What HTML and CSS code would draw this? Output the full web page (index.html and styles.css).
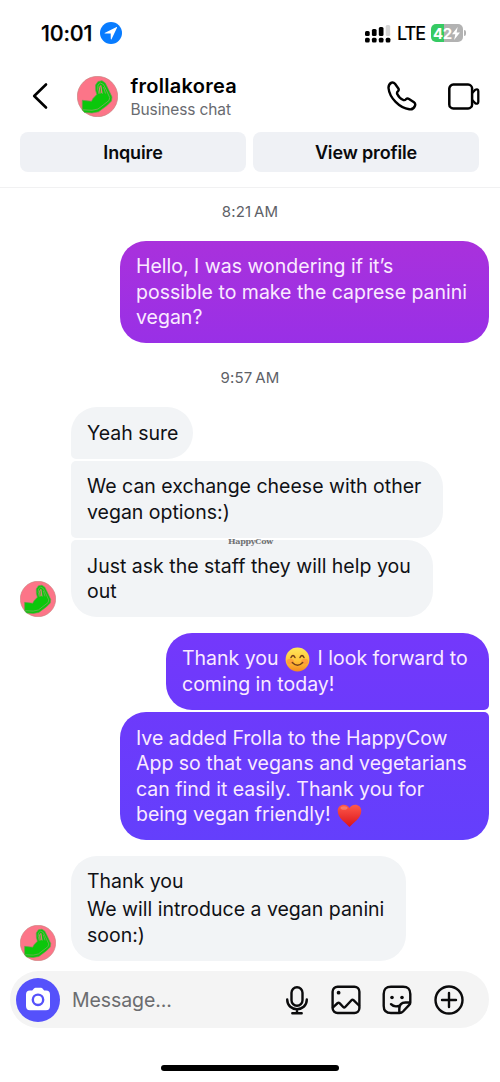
FILE: index.html
```html
<!DOCTYPE html>
<html lang="en">
<head>
<meta charset="utf-8">
<title>frollakorea</title>
<link rel="stylesheet" href="styles.css">
</head>
<body>
<svg class="defs" width="0" height="0">
  <defs>
    <linearGradient id="face" x1="0" y1="0" x2="0" y2="1"><stop offset="0" stop-color="#ffe75a"/><stop offset=".55" stop-color="#ffc53a"/><stop offset="1" stop-color="#f58a1f"/></linearGradient>
    <linearGradient id="love" x1="0" y1="0" x2="0" y2="1"><stop offset="0" stop-color="#ff5a4a"/><stop offset="1" stop-color="#d9131b"/></linearGradient>
    <symbol id="avatar" viewBox="0 0 41 41">
      <circle cx="20.5" cy="20.5" r="20.2" fill="#fc7588" stroke="#c08078" stroke-width=".6"/>
      <path d="M5.300 24.300L14.500 25.300L16 22.500L19.800 18.500L18.700 14.500L18.500 9L21 5.500L25 4.700L28.300 7L31 12.500L35 21L34.500 25L30 29.500L21.500 35.800L15 37L7.500 36.500L5.300 34Z" fill="#0bc70b" stroke="#6a9a50" stroke-width=".7" stroke-linejoin="round"/>
      <path d="M22 18L20.700 13L21 9L23.500 7L26.500 8.500L29 13.500L32.700 21.500L32 24.500L21 33L15 34.300L6 33.800M24 10.500L25.300 18M26.500 11L28.500 17.500" fill="none" stroke="#88a866" stroke-width=".8"/>
      <path d="M23.100 17.500L22.300 11.500L23.800 9.500L24.800 17" fill="none" stroke="#f07a80" stroke-width="1"/>
    </symbol>
  </defs>
</svg>
<div class="screen">
  <div class="status">
    <span class="clock">10:01</span>
    <svg class="location" width="22" height="22" viewBox="0 0 22 22"><circle cx="11" cy="11" r="11" fill="#087cff"/><path d="M4.600 10.900L16.600 5.100Q17.300 4.900 17 5.700L11.500 17.200Q11 17.800 10.800 17L10.700 11.600L5 11.500Q4.100 11.300 4.600 10.900Z" fill="#fff"/></svg>
    <svg class="signal" width="26" height="19" viewBox="0 0 26 19">
      <g fill="#000"><rect x="0" y="7" width="4.700" height="5" rx="1.500"/><rect x="6.900" y="5" width="4.700" height="7" rx="1.500"/><rect x="13.800" y="3" width="4.700" height="9" rx="1.500"/><rect x="0" y="13.800" width="4.700" height="4.800" rx="1.500"/><rect x="6.900" y="13.800" width="4.700" height="4.800" rx="1.500"/><rect x="13.800" y="13.800" width="4.700" height="4.800" rx="1.500"/><rect x="20.700" y="13.800" width="4.700" height="4.800" rx="1.500"/></g>
      <rect x="20.700" y="1" width="4.500" height="11" rx="1.500" fill="#d6d6d6"/>
    </svg>
    <span class="network">LTE</span>
    <div class="battery">
      <span>42</span>
      <svg width="8" height="13" viewBox="0 0 8 13"><path d="M5.700 0L0 7.200H3.300L2.100 13L8 5.500H4.600Z" fill="#fff"/></svg>
    </div>
    <i class="battery-tip"></i>
  </div>

  <header class="header">
    <svg class="back" width="18" height="28" viewBox="0 0 18 28"><path d="M15 2.500L3.200 14L15 25.500" fill="none" stroke="#000" stroke-width="2.600" stroke-linecap="round" stroke-linejoin="round"/></svg>
    <svg class="avatar-large"><use href="#avatar"/></svg>
    <div class="who"><div class="name">frollakorea</div><div class="kind">Business chat</div></div>
    <svg class="call" width="30" height="30" viewBox="0 0 30 30"><path d="M4.500 1.600Q6.500 1 8 2.800L11.200 7.200Q12.300 8.900 11 10.200Q9.600 11.400 10.200 13.100C11.600 16 13.600 17.900 16.300 19Q17.800 19.500 19 18.200Q20.400 17 22 18L27 21.300Q28.800 22.600 28 24.700C27 27.300 25 28.700 22.300 28.300C12.500 27 2.500 17 1.500 7Q1.400 3.200 4.500 1.600Z" fill="none" stroke="#000" stroke-width="2.400" stroke-linejoin="round"/></svg>
    <svg class="video" width="32" height="27" viewBox="0 0 32 27"><rect x="1.300" y="1.600" width="22.800" height="23.800" rx="4" fill="none" stroke="#000" stroke-width="2.500"/><path d="M24.200 10L27.300 6.700Q30.300 5.500 30.300 8.200V18.800Q30.300 21.300 27.300 20.300L24.200 17" fill="none" stroke="#000" stroke-width="2.300" stroke-linejoin="round"/></svg>
  </header>

  <div class="actions"><div class="button">Inquire</div><div class="button">View profile</div></div>

  <main class="chat">
    <div class="time first">8:21 AM</div>
    <div class="bubble mine violet">Hello, I was wondering if it’s<br>possible to make the caprese panini<br>vegan?</div>
    <div class="time second">9:57 AM</div>
    <div class="row">
      <svg class="avatar-small"><use href="#avatar"/></svg>
      <div class="stack">
        <div class="bubble theirs top w-yeah">Yeah sure</div>
        <div class="bubble theirs middle w-exchange">We can exchange cheese with other<br>vegan options:)</div>
        <div class="bubble theirs bottom w-staff">Just ask the staff they will help you<br>out</div>
      </div>
      <div class="watermark">HappyCow</div>
    </div>
    <div class="bubble mine thanks">Thank you <svg class="emoji smile" width="25" height="25" viewBox="0 0 25 25"><circle cx="12.500" cy="12.500" r="11.900" fill="url(#face)"/><ellipse cx="5.300" cy="14.500" rx="3.600" ry="2.800" fill="#ff853d" opacity=".55"/><ellipse cx="19.700" cy="14.500" rx="3.600" ry="2.800" fill="#ff853d" opacity=".55"/><path d="M6 10.500Q8 6.500 10 10.500M15 10.500Q17 6.500 19 10.500M7.300 15.500Q12.500 21 17.700 15.500" fill="none" stroke="#74401a" stroke-width="1.500" stroke-linecap="round"/></svg> I look forward to<br>coming in today!</div>
    <div class="bubble mine added">Ive added Frolla to the HappyCow<br>App so that vegans and vegetarians<br>can find it easily. Thank you for<br>being vegan friendly! <svg class="emoji heart" width="25" height="25" viewBox="0 0 25 25"><path d="M12.500 24C9 20 .7 15.500 .7 7.800C.7 1.300 9 -.7 12.500 5C16 -.7 24.300 1.300 24.300 7.800C24.300 15.500 16 20 12.500 24Z" fill="url(#love)"/><ellipse cx="7" cy="5" rx="3.500" ry="1.800" fill="#ff9b85" opacity=".55"/></svg></div>
    <div class="row last">
      <svg class="avatar-small"><use href="#avatar"/></svg>
      <div class="bubble theirs w-panini"><p>Thank you</p><p>We will introduce a vegan panini<br>soon:)</p></div>
    </div>
  </main>

  <footer class="composer">
    <svg class="camera" width="44" height="44" viewBox="0 0 44 44"><circle cx="22" cy="22" r="22" fill="#5551fb"/><path d="M14 12.500H16.200L18 10.500Q18.600 9.800 19.500 9.800H25Q25.900 9.800 26.500 10.500L28.200 12.500H30Q34 12.500 34 16.500V28Q34 32.200 30 32.200H14Q10 32.200 10 28V16.500Q10 12.500 14 12.500Z" fill="#fff"/><circle cx="22" cy="21.800" r="5.200" fill="none" stroke="#5551fb" stroke-width="2.400"/></svg>
    <span class="placeholder">Message...</span>
    <div class="tools">
      <svg class="mic" width="30" height="30" viewBox="0 0 30 30"><rect x="9.500" y="2.200" width="11" height="18.600" rx="5.500"/><path d="M5.200 14.500C5.200 27.400 24.800 27.400 24.800 14.500M15 24.200V28M10.300 28.200H19.700"/></svg>
      <svg width="30" height="30" viewBox="0 0 30 30"><rect x="1.600" y="1.700" width="26.800" height="26.300" rx="5"/><path d="M2 22.300L6.700 18Q7.700 17.200 8.600 18.200L12.200 22Q13.200 23 14.200 22L20.500 15.200Q21.500 14.200 22.500 15.200L28 20.500"/><circle class="dot" cx="7.600" cy="7.700" r="1.900"/></svg>
      <svg width="30" height="30" viewBox="0 0 30 30"><path d="M28.300 17.500V9Q28.300 1.700 21 1.700H9Q1.700 1.700 1.700 9V21Q1.700 28 9 28H17.500Q19.500 28 21 26.500L27 20.200Q28.300 19 28.300 17.500ZM17.300 27.800V24Q17.300 17.500 23.500 17.500H28M9 19.200Q12.200 22.500 17 20.800"/><circle class="dot" cx="10" cy="12.500" r="1.800"/><circle class="dot" cx="20" cy="12.500" r="1.800"/></svg>
      <svg width="30" height="30" viewBox="0 0 30 30"><circle cx="15" cy="15" r="13.500"/><path d="M15 8V22M8 15H22"/></svg>
    </div>
  </footer>
  <div class="home"></div>
</div>
</body>
</html>
```
FILE: styles.css
```css
* { box-sizing: border-box; }
body { margin: 0; background: #fff; font-family: Inter, "Liberation Sans", sans-serif; color: #101115; }
svg { display: block; flex: none; }
p { margin: 0; }
.defs { position: absolute; }
.screen { width: 500px; height: 1082px; display: flex; flex-direction: column; overflow: hidden; }

.status { height: 66px; display: flex; align-items: center; padding-left: 41px; color: #000; flex: none; }
.clock { width: 59px; font-size: 21.500px; font-weight: 500; letter-spacing: -.2px; white-space: nowrap; -webkit-text-stroke: .25px #000; }
.signal { margin-left: 243px; }
.network { width: 33.500px; font-size: 18px; font-weight: 500; letter-spacing: -1px; margin-left: 6px; }
.battery { width: 32px; height: 18px; border-radius: 5px; background: linear-gradient(90deg, #36ca63 42%, #b2b2b2 42%); display: flex; align-items: center; justify-content: center; color: #fff; font-size: 15px; font-weight: 700; letter-spacing: -.4px; }
.battery-tip { width: 2px; height: 6px; margin-left: 1px; border-radius: 0 2px 2px 0; background: #b2b2b2; }

.header { height: 66px; display: flex; align-items: center; padding: 0 19px 6px 31px; flex: none; }
.avatar-large { width: 41px; height: 41px; margin-left: 28px; }
.who { width: 258px; margin-left: 12.500px; padding-top: 3px; }
.name { font-size: 20px; line-height: 24px; font-weight: 600; letter-spacing: .28px; color: #000; }
.kind { font-size: 15.500px; line-height: 23px; letter-spacing: -.12px; color: #696b70; }
.call { margin-left: -1.500px; }
.video { margin-left: 31px; }

.actions { height: 56px; flex: none; display: grid; grid-template-columns: 226px 226px; gap: 7px; padding-left: 20px; border-bottom: 1.500px solid #f1f1f2; }
.button { height: 40px; border-radius: 8px; background: #eff1f5; text-align: center; font-size: 18px; line-height: 41px; font-weight: 600; letter-spacing: -.15px; color: #090a0d; }

.chat { height: 783px; flex: none; display: flex; flex-direction: column; }
.time { text-align: center; font-size: 15px; line-height: 20px; word-spacing: -1.500px; letter-spacing: .15px; color: #5e6167; }
.first { margin: 13.500px 0 19.200px; }
.second { margin: 25px 0 19.300px; }
.bubble { padding: 13.300px 0 12.300px 16px; border-radius: 26px; font-size: 19.500px; line-height: 25.600px; white-space: nowrap; }
.mine { align-self: flex-end; margin-right: 11px; width: 369px; color: #faeaff; }
.violet { background: linear-gradient(#a931dc, #9930e6); }
.thanks { width: 323px; margin-top: 16px; border-bottom-right-radius: 5px; background: linear-gradient(#7438fb, #6c3afb); }
.added { margin-top: 2.500px; border-top-right-radius: 5px; background: linear-gradient(#6d3afb, #643ffc); }
.emoji { display: inline-block; vertical-align: 1px; margin: -8px 0 -8px 1px; }
.smile { margin-right: 2px; }
.row { position: relative; display: flex; align-items: flex-end; gap: 15px; padding-left: 20px; }
.last { margin-top: 15.700px; }
.last p + p { margin-top: 2.500px; }
.avatar-small { width: 36px; height: 36px; }
.stack { display: flex; flex-direction: column; gap: 2.500px; }
.theirs { background: #f2f4f6; }
.top { border-bottom-left-radius: 5px; }
.middle { border-top-left-radius: 5px; border-bottom-left-radius: 5px; }
.bottom { border-top-left-radius: 5px; }
.w-yeah { width: 122px; }
.w-exchange { width: 372px; }
.w-staff { width: 362px; }
.w-panini { width: 335px; }
.watermark { position: absolute; left: 228px; top: 128px; font: bold 8px/12px "DejaVu Serif", serif; letter-spacing: -.3px; color: #707173; }

.composer { height: 57px; width: 479px; margin-left: 10px; border-radius: 28.500px; background: #f4f4f4; display: flex; align-items: center; padding: 0 25.500px 0 6px; flex: none; }
.placeholder { margin-left: 12px; font-size: 19.500px; letter-spacing: -.1px; color: #6b6c6f; }
.tools { margin-left: auto; display: flex; gap: 21.300px; }
.tools svg { fill: none; stroke: #0b0b0c; stroke-width: 2.400; stroke-linecap: round; stroke-linejoin: round; }
.mic { margin-right: -2.500px; }
.tools .dot { fill: #0b0b0c; stroke: none; }
.home { width: 178px; height: 6px; margin: 37px auto 0; border-radius: 3px; background: #000; flex: none; }
```
